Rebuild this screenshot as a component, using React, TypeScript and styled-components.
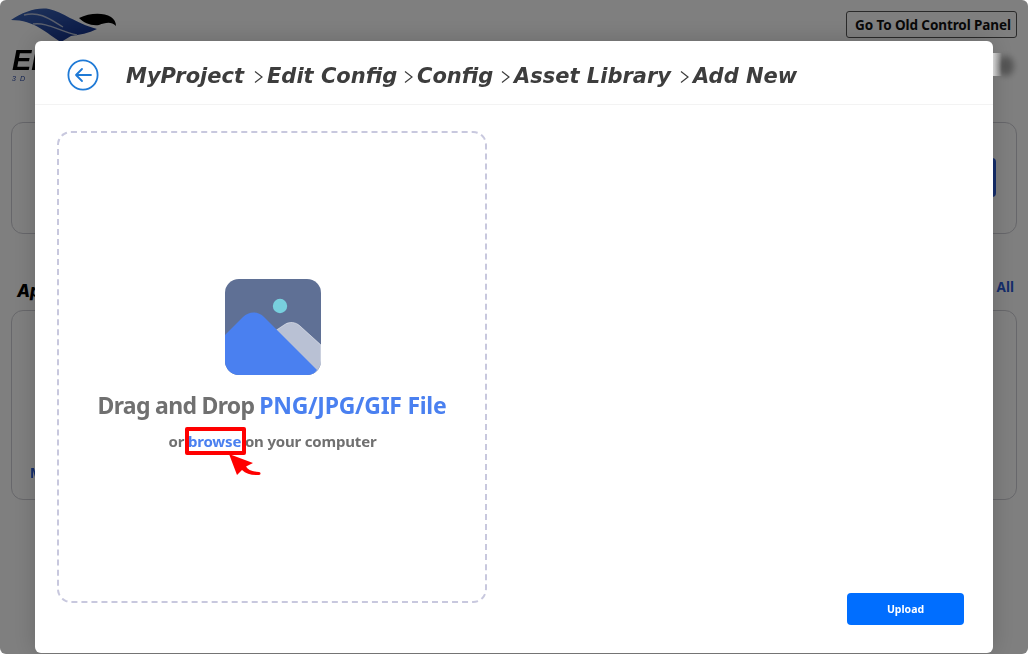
import React from "react";
import styled, { createGlobalStyle } from "styled-components";

const Global = createGlobalStyle`
  html, body { margin: 0; padding: 0; background: #fff; }
  body { font-family: "Noto Sans", "Liberation Sans", sans-serif; }
`;

const Page = styled.div`
  position: relative;
  width: 1028px;
  height: 654px;
  overflow: hidden;
  background: #fff;
  box-sizing: border-box;
  padding: 0 11px;
`;

const TopBar = styled.header`
  display: flex;
  justify-content: space-between;
  align-items: flex-start;
  height: 122px;
  filter: blur(0.4px);
`;

const Brand = styled.div`
  position: relative;
  display: flex;
  flex-direction: column;
  padding-left: 1px;
`;

const BrandMark = styled.svg`
  display: block;
  margin-left: -1px;
  margin-top: 6px;
  width: 112px;
  height: 36px;
`;

const BrandName = styled.div`
  font: italic 900 29px/28px "Liberation Sans", sans-serif;
  color: #000;
  margin-top: 4px;
`;

const BrandTag = styled.div`
  font: italic 400 7px/8px "Liberation Sans", sans-serif;
  letter-spacing: 4px;
  color: #1e3fa0;
  margin-top: 1px;
`;

const TopRight = styled.div`
  display: flex;
  flex-direction: column;
  align-items: flex-end;
  padding-top: 11px;
`;

const OldPanelButton = styled.button`
  width: 171px;
  height: 27px;
  box-sizing: border-box;
  border: 1px solid #555;
  border-radius: 3px;
  background: #fff;
  color: #111;
  padding: 0 0 0 3px;
  font: 700 13.5px "Noto Sans", sans-serif;
  letter-spacing: -0.1px;
`;

const Avatar = styled.div`
  width: 16px;
  height: 20px;
  margin-top: 18px;
  margin-right: 3px;
  border-radius: 50%;
  background: #aaa;
  filter: blur(3px);
`;

const Card = styled.section<{ $h: number }>`
  position: relative;
  height: ${(p) => p.$h}px;
  box-sizing: border-box;
  border: 1px solid #cfcfd6;
  border-radius: 12px;
`;

const CardAction = styled.div`
  position: absolute;
  top: 35px;
  right: 20px;
  width: 40px;
  height: 39px;
  background: #2a5bd7;
  border-radius: 4px;
`;

const SectionHead = styled.div`
  display: flex;
  justify-content: space-between;
  align-items: center;
  height: 76px;
  padding: 0 3px 0 6px;
`;

const SectionTitle = styled.div`
  font: italic 800 17px "Inter", sans-serif;
  color: #000;
  padding-top: 38px;
`;

const ViewAll = styled.div`
  font: 700 13.5px "Noto Sans", sans-serif;
  color: #2a5bd7;
  padding-top: 30px;
`;

const CardLink = styled.div`
  position: absolute;
  left: 18px;
  bottom: 17px;
  font: 700 13.5px "Noto Sans", sans-serif;
  color: #2a5bd7;
`;

const Overlay = styled.div`
  position: absolute;
  inset: 0;
  background: rgba(0, 0, 0, 0.5);
  border-radius: 6px;
`;

const AvatarGlow = styled.div`
  position: absolute;
  left: 993px;
  top: 53px;
  width: 9px;
  height: 23px;
  background: linear-gradient(90deg, #e4e4e4, rgba(128, 128, 128, 0));
  filter: blur(0.6px);
`;

const Modal = styled.div`
  position: absolute;
  left: 35px;
  top: 41px;
  width: 958px;
  height: 612px;
  display: flex;
  flex-direction: column;
  background: #fff;
  border-radius: 6px;
  box-shadow: 0 0 24px rgba(0, 0, 0, 0.18);
`;

const ModalHead = styled.div`
  display: flex;
  align-items: center;
  height: 64px;
  box-sizing: border-box;
  padding-left: 32px;
  border-bottom: 1px solid #f3f3f3;
`;

const BackIcon = styled.svg`
  display: block;
  width: 32px;
  height: 32px;
  flex: none;
  margin-right: 27px;
  margin-top: 4px;
`;

const Crumbs = styled.div`
  display: flex;
  align-items: center;
  margin-top: 6px;
`;

const Crumb = styled.span<{ $w: number }>`
  display: block;
  width: ${(p) => p.$w}px;
  white-space: nowrap;
  font: italic 700 21px/30px "DejaVu Sans", sans-serif;
  color: #3d3d3d;
`;

const Sep = styled.svg`
  display: block;
  flex: none;
  width: 9px;
  height: 14px;
  margin: 2px 4px 0 8px;
`;

const ModalBody = styled.div`
  flex: 1;
  display: flex;
  justify-content: space-between;
  align-items: flex-end;
  padding: 26px 29px 28px 22px;
`;

const DropZone = styled.div`
  align-self: flex-start;
  width: 430px;
  height: 472px;
  box-sizing: border-box;
  border: 2px dashed #c8c8de;
  border-radius: 14px;
  display: flex;
  flex-direction: column;
  align-items: center;
  padding-top: 146px;
`;

const ImageGlyph = styled.svg`
  display: block;
  width: 96px;
  height: 96px;
  margin-left: 2px;
`;

const DropTitle = styled.div`
  display: flex;
  gap: 5px;
  margin-top: 12px;
  font: 700 23px/36px "Noto Sans", sans-serif;
  letter-spacing: -0.7px;
  color: #707070;
`;

const Accent = styled.span`
  color: #4a80f0;
  letter-spacing: -0.28px;
`;

const DropHint = styled.div`
  position: relative;
  margin-top: 4px;
  padding-left: 1px;
  font: 700 15px/28px "Noto Sans", sans-serif;
  letter-spacing: -0.18px;
  color: #707070;
`;

const Browse = styled.span`
  position: relative;
  color: #4a80f0;
`;

const Marker = styled.span`
  position: absolute;
  left: -3px;
  right: -5px;
  top: -4px;
  height: 28px;
  box-sizing: border-box;
  border: 4px solid #f00;
  border-radius: 2px;
`;

const Pointer = styled.svg`
  position: absolute;
  left: 40px;
  top: 23px;
  width: 34px;
  height: 23px;
`;

const UploadButton = styled.button`
  width: 117px;
  height: 32px;
  border: 0;
  border-radius: 4px;
  background: #006eff;
  color: #fff;
  padding: 0;
  font: 700 10.5px "Noto Sans", sans-serif;
`;

const crumbs: [string, number][] = [
  ["MyProject", 120],
  ["Edit Config", 129],
  ["Config", 76],
  ["Asset Library", 158],
];

export default function App() {
  return (
    <Page>
      <Global />
      <TopBar>
        <Brand>
          <BrandMark viewBox="12 6 112 36">
            <defs>
              <linearGradient id="wave" x1="0" y1="0" x2="1" y2="1">
                <stop offset="0" stopColor="#3f68b8" />
                <stop offset="1" stopColor="#0d2a88" />
              </linearGradient>
            </defs>
            <path
              d="M12 20C24 12 38 7 50 9C64 12 76 23 98 29C90 33 80 35 72 36L62 42C48 34 36 20 12 20Z"
              fill="url(#wave)"
            />
            <path d="M25 15C42 11 52 20 64 27M34 24C48 22 60 31 78 35" fill="none" stroke="#b5bfd8" strokeWidth="1.4" />
            <path d="M80 18C90 13 104 12 112 17C115 19 117 22 117 26C112 21 106 23 100 25C92 26 85 23 80 18Z" fill="#000" />
          </BrandMark>
          <BrandName>EI</BrandName>
          <BrandTag>3D</BrandTag>
        </Brand>
        <TopRight>
          <OldPanelButton>Go To Old Control Panel</OldPanelButton>
          <Avatar />
        </TopRight>
      </TopBar>
      <Card $h={112}>
        <CardAction />
      </Card>
      <SectionHead>
        <SectionTitle>Apps</SectionTitle>
        <ViewAll>All</ViewAll>
      </SectionHead>
      <Card $h={190}>
        <CardLink>More</CardLink>
      </Card>
      <Overlay />
      <AvatarGlow />
      <Modal>
        <ModalHead>
          <BackIcon viewBox="0 0 32 32" fill="none" stroke="#1f7ad6">
            <circle cx="16" cy="16" r="14.6" strokeWidth="1.8" />
            <path d="M24 16H9M15 10l-6 6 6 6" strokeWidth="1.8" strokeLinecap="round" strokeLinejoin="round" />
          </BackIcon>
          <Crumbs>
            {crumbs.map(([label, w]) => (
              <React.Fragment key={label}>
                <Crumb $w={w}>{label}</Crumb>
                <Sep viewBox="0 0 9 14" fill="none" stroke="#3d3d3d" strokeWidth="1.2">
                  <path d="M1 1.5L8 7 1 12.5" />
                </Sep>
              </React.Fragment>
            ))}
            <Crumb $w={108}>Add New</Crumb>
          </Crumbs>
        </ModalHead>
        <ModalBody>
          <DropZone>
            <ImageGlyph viewBox="0 0 96 96">
              <defs>
                <clipPath id="tile">
                  <rect width="96" height="96" rx="14" />
                </clipPath>
              </defs>
              <g clipPath="url(#tile)">
                <rect width="96" height="96" fill="#5f7095" />
                <circle cx="55" cy="27" r="7.2" fill="#78d0de" />
                <path d="M50 52L59 46C64 42 71 43 75 47L96 66V96H88Z" fill="#b9c1d4" stroke="#fff" strokeWidth="0.5" />
                <path d="M0 56L18 38C24 32 33 32 39 38L92 91L88 96H0Z" fill="#4a80f0" />
              </g>
            </ImageGlyph>
            <DropTitle>
              <span>Drag and Drop</span>
              <Accent>PNG/JPG/GIF File</Accent>
            </DropTitle>
            <DropHint>
              or{" "}
              <Browse>
                browse
                <Marker />
                <Pointer viewBox="0 0 34 23">
                  <path d="M1 0L25 9L18 12.5C20 16 24 17.5 31 18C33 18.2 33 20.8 31 21C24 21.5 18 20 14 16L9 21Z" fill="#f00" />
                </Pointer>
              </Browse>{" "}
              on your computer
            </DropHint>
          </DropZone>
          <UploadButton>Upload</UploadButton>
        </ModalBody>
      </Modal>
    </Page>
  );
}
